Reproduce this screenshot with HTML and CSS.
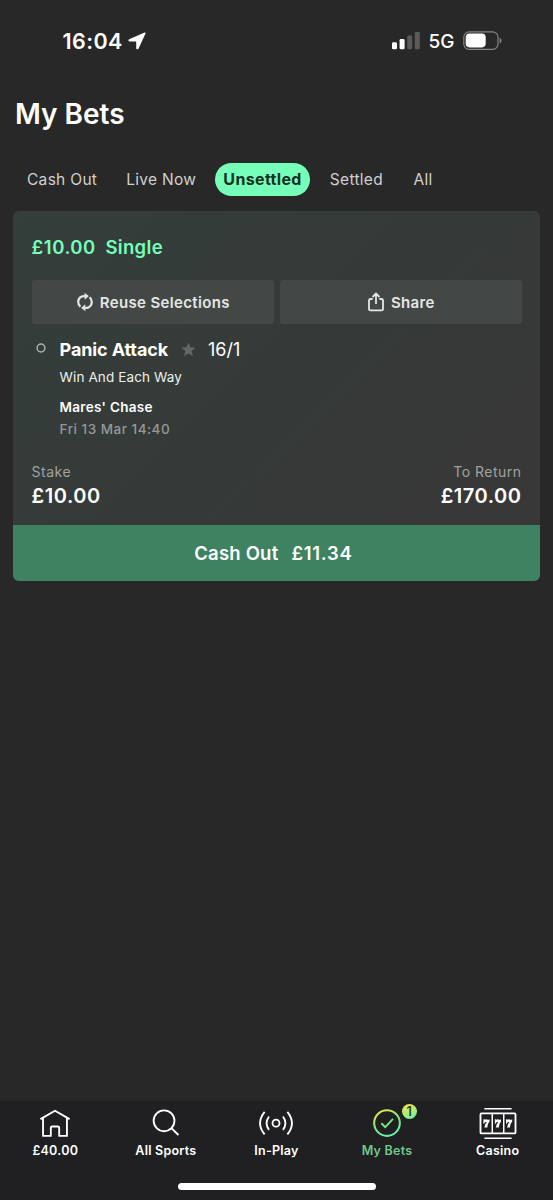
FILE: index.html
```html
<!DOCTYPE html>
<html lang="en">
<head>
<meta charset="utf-8">
<title>My Bets</title>
<link rel="stylesheet" href="styles.css">
</head>
<body>
<div class="app">
  <header class="status">
    <div class="status-left">
      <span class="clock">16:04</span>
      <svg class="location" viewBox="0 0 18 18"><path d="M16.6 .5 1.2 7.2c-1.300.6-.9 2.300.4 2.300h6.200c.3 0 .4.1.4.4v6.200c0 1.400 1.800 1.700 2.400.4L17.500 1.500c.4-.8-.2-1.300-.9-1z"/></svg>
    </div>
    <div class="status-right">
      <svg class="signal" viewBox="0 0 28 18"><g fill="#fff"><rect x="0" y="10.200" width="5" height="7" rx="1.300"/><rect x="7.600" y="7" width="5" height="10.200" rx="1.300"/></g><g fill="#5a5a5a"><rect x="15.200" y="3.600" width="5" height="13.600" rx="1.300"/><rect x="22.800" y="0" width="5" height="17.200" rx="1.300"/></g></svg>
      <span class="network">5G</span>
      <svg class="battery" viewBox="0 0 40 20"><rect x=".8" y=".8" width="34.200" height="17.600" rx="5.400" fill="none" stroke="#858585" stroke-width="1.200"/><rect x="2.700" y="2.600" width="20" height="13.800" rx="3.800" fill="#fff"/><path d="M36.700 6.800c2.400.9 2.400 4.700 0 5.600z" fill="#858585"/></svg>
    </div>
  </header>
  <h1 class="title">My Bets</h1>
  <nav class="tabs">
    <span class="tab">Cash Out</span>
    <span class="tab">Live Now</span>
    <span class="tab active">Unsettled</span>
    <span class="tab">Settled</span>
    <span class="tab">All</span>
  </nav>
  <main class="card">
    <h2 class="bet"><span class="stake">£10.00</span><span>Single</span></h2>
    <div class="actions">
      <button class="action"><svg class="reuse" viewBox="0 0 16 18"><g fill="none" stroke="#e4e6e5" stroke-width="2.200"><path d="M3.400 13.800C.4 11 .4 5.800 4.200 3.800 5.400 3.100 6.800 3 8.400 3.100"/><path d="M12.600 4.200c3 2.800 3 8-.8 10-1.200.7-2.600.8-4.200.7"/></g><path d="M7.500-.2 11.900 3.100 7.800 6.800zM8.500 18.200 4.100 14.900l4.100-3.700z" fill="#e4e6e5"/></svg><span>Reuse Selections</span></button>
      <button class="action"><svg class="share" viewBox="0 0 16 20"><path d="M4.700 7H2.600Q1 7 1 8.600v8.200q0 1.600 1.600 1.600h10.800q1.600 0 1.600-1.600V8.600Q15 7 13.400 7h-2.100M8 12V1.500M4.500 5 8 1.500 11.500 5"/></svg><span>Share</span></button>
    </div>
    <section class="selection">
      <svg class="dot" viewBox="0 0 10 10"><circle cx="5" cy="5" r="3.900"/></svg>
      <div class="details">
        <div class="runner"><strong>Panic Attack</strong><svg class="star" viewBox="0 0 16 15"><path d="m8 0 2.100 5.200 5.700.4-4.400 3.600 1.400 5.600L8 11.800l-4.800 3 1.400-5.600L.2 5.600l5.700-.4z"/></svg><span class="odds">16/1</span></div>
        <div class="market">Win And Each Way</div>
        <div class="race">Mares' Chase</div>
        <div class="time">Fri 13 Mar 14:40</div>
      </div>
    </section>
    <section class="totals">
      <div><div class="label">Stake</div><div class="amount">£10.00</div></div>
      <div class="return"><div class="label">To Return</div><div class="amount">£170.00</div></div>
    </section>
    <button class="cashout"><span>Cash Out</span><span class="offer">£11.34</span></button>
  </main>
  <footer class="bottom">
    <div class="item"><svg viewBox="0 0 40 36"><path class="line" d="m5 12.500 15-8.700 15 8.700M7.700 11.500v18.200h8v-8.300q0-1.300 1.300-1.300h6q1.300 0 1.300 1.300v8.300h8V11.500"/></svg><span>£40.00</span></div>
    <div class="item"><svg viewBox="0 0 40 36"><circle class="line" cx="18" cy="14.200" r="10.700"/><path class="line" d="m25.500 21.800 7.300 7"/></svg><span>All Sports</span></div>
    <div class="item"><svg viewBox="0 0 40 36"><circle class="line" cx="20" cy="16.600" r="3.600"/><path class="line" d="M12.800 9.700q-5 6.900 0 13.800M8.300 5q-9.400 11.600 0 23.200M27.200 9.700q5 6.900 0 13.800M31.700 5q9.400 11.600 0 23.200"/></svg><span>In-Play</span></div>
    <div class="item selected"><svg viewBox="0 0 40 36"><defs><linearGradient id="glow" gradientUnits="userSpaceOnUse" x1="12" y1="4" x2="27" y2="31"><stop stop-color="#e5e64c"/><stop offset=".5" stop-color="#79e77e"/><stop offset="1" stop-color="#63f5b2"/></linearGradient></defs><circle cx="20" cy="16.500" r="13.200" fill="none" stroke="url(#glow)" stroke-width="2.100"/><path d="m14.200 16.700 4 4.100 8-8.500" fill="none" stroke="url(#glow)" stroke-width="1.900"/></svg><span>My Bets</span><b class="badge">1</b></div>
    <div class="item"><svg viewBox="0 0 40 36"><path class="line thin" d="M6 1.700h28M6 32.200h28"/><rect class="line" x="2" y="6.600" width="36" height="20.600" rx="1"/><path class="line thin" d="M14.100 6.600v20.600M25.900 6.600v20.600"/><path id="seven" fill="#fff" d="M5 12.500h1l.5.700q1-1.100 2.300-.4 1.100.6 2.500-.3v2.300Q8.900 17.300 9 21H6q0-3.400 2.500-5.300-1.400-.5-2.400.4L5.800 17.300H5z"/><use href="#seven" x="11.800"/><use href="#seven" x="23.300"/></svg><span>Casino</span></div>
    <i class="home-bar"></i>
  </footer>
</div>
</body>
</html>
```
FILE: styles.css
```css
* { box-sizing: border-box; }
body { margin: 0; background: #282828; color: #fff; font-family: Inter, "Liberation Sans", sans-serif; }
svg { display: block; flex: none; }
button { border: 0; padding: 0; margin: 0; font: inherit; color: inherit; }
.app { width: 553px; height: 1200px; display: flex; flex-direction: column; background: #282828; overflow: hidden; }
.status { height: 82px; padding: 0 50.500px 0 62.500px; display: flex; justify-content: space-between; align-items: center; }
.status-left, .status-right { display: flex; align-items: center; }
.clock { font-size: 21.500px; font-weight: 600; letter-spacing: .4px; }
.location { width: 18px; height: 18px; margin: -1px 0 0 5px; fill: #fff; }
.signal { width: 28px; height: 18px; }
.network { font-size: 19px; font-weight: 500; margin: 1px 0 0 8.500px; }
.battery { width: 40px; height: 20px; margin-left: 8px; }
.title { margin: 14px 0 0 15px; font-size: 28px; line-height: 36px; font-weight: 600; }
.tabs { display: flex; margin-top: 31px; padding-left: 19.500px; height: 33px; font-size: 15.500px; letter-spacing: .3px; color: #d0d0d0; }
.tab { padding: 0 7.500px; line-height: 33px; margin-right: 14px; }
.tab.active { margin: 0 12.500px 0 -2.500px; background: #75ffb9; color: #163020; font-size: 16px; line-height: 32px; font-weight: 700; letter-spacing: .35px; border-radius: 17px; padding: 0 8px; }
.tab:last-child { margin-left: 1.500px; }
.card { width: 527.500px; height: 370px; margin: 15px 0 0 12.600px; border-radius: 6px; overflow: hidden; background: linear-gradient(135deg, #343e3a 0%, #353a38 50%, #383838 82%); display: flex; flex-direction: column; }
.bet { margin: 24px 0 0 19px; font-size: 18.500px; line-height: 25px; font-weight: 600; color: #75ffb9; display: flex; gap: 9.700px; letter-spacing: .3px; }
.stake { letter-spacing: .55px; }
.actions { display: flex; gap: 6px; margin: 20px 18.500px 0 19px; height: 44px; }
.action { flex: 1; display: flex; justify-content: center; align-items: center; border-radius: 3px; background: #434846; color: #e4e6e5; font-size: 15px; font-weight: 600; letter-spacing: .35px; padding-left: 1.500px; }
.reuse { width: 16px; height: 18px; margin-right: 7px; }
.share { width: 16px; height: 20px; margin-right: 7px; fill: none; stroke: #e4e6e5; stroke-width: 1.800; }
.selection { display: flex; padding: 13px 0 0 23.500px; }
.dot { width: 10px; height: 10px; margin-top: 6px; fill: none; stroke: #adb0af; stroke-width: 1.500; }
.details { margin-left: 13.500px; }
.runner { display: flex; align-items: center; height: 24px; font-size: 18px; }
.runner strong { font-weight: 700; letter-spacing: -.12px; }
.star { width: 15px; height: 15px; margin: 0 12px 0 13px; fill: #626664; }
.odds { font-size: 18px; }
.market { margin-top: 6px; font-size: 13.500px; line-height: 20px; letter-spacing: .12px; color: #edefed; }
.race { margin-top: 10px; font-size: 13.500px; line-height: 20px; font-weight: 600; letter-spacing: .28px; }
.time { margin-top: 2px; font-size: 13.500px; line-height: 20px; font-weight: 500; letter-spacing: .5px; color: #969897; }
.totals { display: flex; justify-content: space-between; margin: 23px 19px 0; }
.return { text-align: right; }
.label { font-size: 14px; line-height: 20px; letter-spacing: .5px; color: #a0a2a1; }
.amount { margin-top: 2px; font-size: 20px; line-height: 25px; font-weight: 600; letter-spacing: .55px; }
.return .label, .return .amount { margin-right: -.5px; }
.cashout { margin-top: auto; height: 56px; flex: none; display: flex; justify-content: center; align-items: center; gap: 13px; padding-right: 6px; background: #3e8262; font-size: 18.500px; font-weight: 600; letter-spacing: .2px; }
.offer { letter-spacing: .7px; }
.bottom { position: relative; margin-top: auto; height: 99px; display: grid; grid-template-columns: repeat(5, 1fr); background: #202022; padding-top: 6px; }
.item { position: relative; display: flex; flex-direction: column; align-items: center; font-size: 12.500px; font-weight: 600; line-height: 17px; letter-spacing: .25px; }
.item svg { width: 40px; height: 35px; }
.line { fill: none; stroke: #fff; stroke-width: 1.900; stroke-linejoin: round; }
.line.thin { stroke-width: 1.500; }
.selected { color: #6fc98e; }
.badge { position: absolute; left: 70px; top: -3px; width: 15px; height: 15px; border-radius: 50%; background: linear-gradient(160deg, #ffe34c, #65f3a2); color: #1d3020; font-size: 13px; line-height: 15px; letter-spacing: 0; text-align: center; font-weight: 500; }
.home-bar { position: absolute; left: 178px; top: 82px; width: 198px; height: 7px; border-radius: 4px; background: #fff; }
```
